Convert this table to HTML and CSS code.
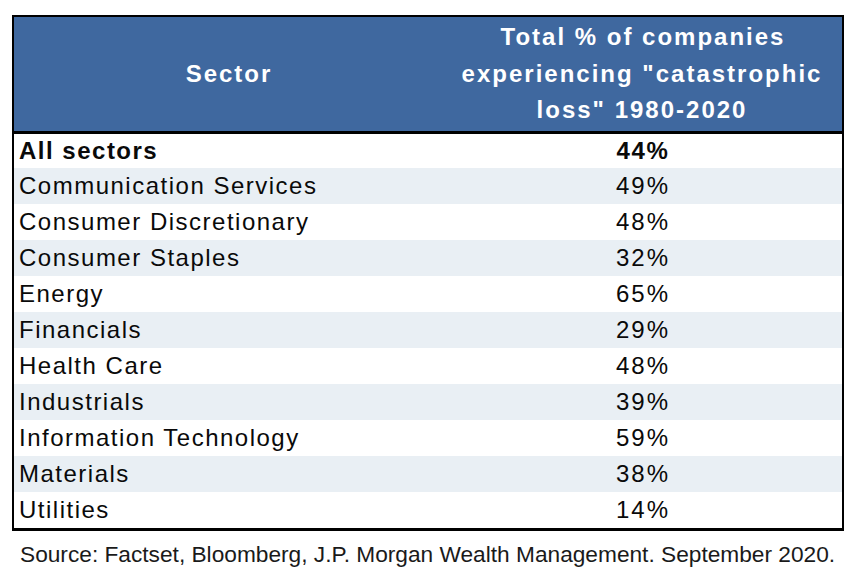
FILE: index.html
```html
<!DOCTYPE html>
<html lang="en">
<head>
<meta charset="utf-8">
<title>Catastrophic loss by sector</title>
<link rel="stylesheet" href="styles.css">
</head>
<body>
<main class="page">
  <table class="loss-table">
    <colgroup>
      <col class="col-sector">
      <col class="col-value">
    </colgroup>
    <thead>
      <tr>
        <th class="head-sector">Sector</th>
        <th class="head-value">Total % of companies<br>experiencing "catastrophic<br>loss" 1980-2020</th>
      </tr>
    </thead>
    <tbody>
      <tr class="row-total"><td class="name">All sectors</td><td class="value">44%</td></tr>
      <tr class="row-shade"><td class="name">Communication Services</td><td class="value">49%</td></tr>
      <tr><td class="name">Consumer Discretionary</td><td class="value">48%</td></tr>
      <tr class="row-shade"><td class="name">Consumer Staples</td><td class="value">32%</td></tr>
      <tr><td class="name">Energy</td><td class="value">65%</td></tr>
      <tr class="row-shade"><td class="name">Financials</td><td class="value">29%</td></tr>
      <tr><td class="name">Health Care</td><td class="value">48%</td></tr>
      <tr class="row-shade"><td class="name">Industrials</td><td class="value">39%</td></tr>
      <tr><td class="name">Information Technology</td><td class="value">59%</td></tr>
      <tr class="row-shade"><td class="name">Materials</td><td class="value">38%</td></tr>
      <tr><td class="name">Utilities</td><td class="value">14%</td></tr>
    </tbody>
  </table>
  <p class="source">Source: Factset, Bloomberg, J.P. Morgan Wealth Management. September 2020.</p>
</main>
</body>
</html>
```

FILE: styles.css
```css
html, body {
  margin: 0;
  padding: 0;
  background: #ffffff;
}

.page {
  padding: 15px 0 0 12px;
  font-family: "Liberation Sans", Arial, sans-serif;
  color: #000000;
}

.loss-table {
  width: 832px;
  table-layout: fixed;
  border-collapse: separate;
  border-spacing: 0;
  border: 2px solid #000000;
  border-bottom-width: 3px;
}

.col-sector { width: 428px; }
.col-value { width: 400px; }

.loss-table th {
  height: 114px;
  padding: 0;
  background: #3f689f;
  color: #ffffff;
  font-weight: bold;
  font-size: 24px;
  line-height: 36.5px;
  letter-spacing: 2px;
  text-indent: 2px;
  text-align: center;
  vertical-align: middle;
  border-bottom: 3px solid #000000;
}

.loss-table td {
  height: 36px;
  padding: 0;
  font-size: 24px;
  line-height: 34px;
  letter-spacing: 1.5px;
  vertical-align: middle;
  white-space: nowrap;
  color: #0a0a0a;
}

.loss-table td.name {
  padding-left: 5px;
  text-align: left;
}

.loss-table td.value {
  text-align: center;
  letter-spacing: 2px;
  text-indent: 2px;
}

.row-total td {
  height: 32px;
  font-weight: bold;
}

.row-total td.value {
  letter-spacing: 1.7px;
}

.row-shade td {
  background: #e9eff4;
}

.source {
  margin: 8px 0 0 8px;
  font-size: 22.7px;
  line-height: 30px;
  color: #1a1a1a;
  white-space: nowrap;
}
```
